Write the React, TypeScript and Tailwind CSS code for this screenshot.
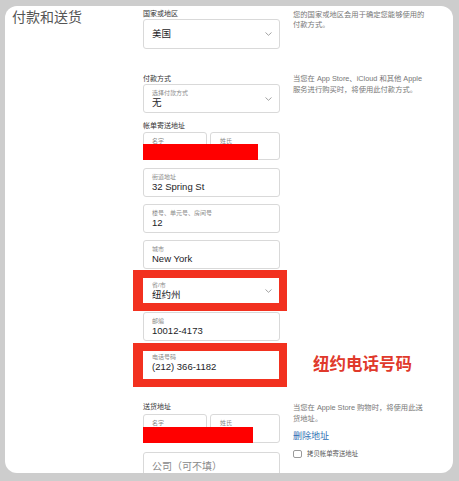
import { FunctionComponent, ReactNode } from "react";

const font = "font-['Liberation_Sans','Noto_Sans_CJK_SC',sans-serif]";

const Chevron: FunctionComponent = () => (
  <svg width="7" height="4" viewBox="0 0 7 4" className="shrink-0">
    <path d="M0.5 0.5 L3.5 3.3 L6.5 0.5" fill="none" stroke="#8c8c8c" strokeWidth="0.8" />
  </svg>
);

interface FieldProps {
  label?: string;
  value: string;
  select?: boolean;
  tall?: boolean;
  noBorder?: boolean;
}

const Field: FunctionComponent<FieldProps> = ({ label, value, select, tall, noBorder }) => (
  <div
    className={`${tall ? "h-[30px]" : "h-[29px]"} w-[137px] rounded-[3px] border ${noBorder ? "border-transparent" : "border-[#d9d9d9]"} bg-white flex items-center pl-[8px] pr-[7px]`}
  >
    <div className="flex-1 flex flex-col">
      {label && <span className="text-[6px] leading-[8px] text-[#8a8a8a]">{label}</span>}
      <span className="text-[9.5px] leading-[12px] text-[#1d1d1f]">{value}</span>
    </div>
    {select && <Chevron />}
  </div>
);

const NameRow: FunctionComponent<{ tall?: boolean; redClass: string }> = ({ tall, redClass }) => (
  <div className={`relative flex gap-[3px] ${tall ? "h-[29px]" : "h-[28px]"}`}>
    <div className="w-[64px] rounded-[3px] border border-[#d9d9d9] pl-[8px] pt-[4px]">
      <span className="text-[6px] leading-[8px] text-[#8a8a8a] block">名字</span>
    </div>
    <div className="flex-1 rounded-[3px] border border-[#d9d9d9] pl-[9px] pt-[4px]">
      <span className="text-[6px] leading-[8px] text-[#8a8a8a] block">姓氏</span>
    </div>
    <div className={`absolute left-0 bottom-0 h-[16px] bg-[#ff0000] ${redClass}`} />
  </div>
);

const Label: FunctionComponent<{ children: ReactNode }> = ({ children }) => (
  <div className="h-[10px] text-[7px] leading-[10px] text-[#333333]">{children}</div>
);

const Desc: FunctionComponent<{ lines: string[]; lh: string }> = ({ lines, lh }) => (
  <div className={`text-[7.3px] ${lh} text-[#777777] whitespace-nowrap`}>
    {lines.map((l, i) => (
      <div key={i}>{l}</div>
    ))}
  </div>
);

const App: FunctionComponent = () => {
  return (
    <div className={`w-[459px] h-[481px] bg-[#cdcdcd] pt-[6px] pl-[5px] ${font}`}>
      <div className="w-[448px] h-[467px] bg-white rounded-[12px] overflow-hidden flex">
        <div className="w-[138px] shrink-0 pl-[7px] pt-[3px]">
          <h1 className="text-[14px] leading-[16px] text-[#555555] font-normal">付款和送货</h1>
        </div>

        <div className="flex flex-col pt-[3px]">
          {/* country */}
          <div className="flex gap-[13px]">
            <div className="w-[137px]">
              <Label>国家或地区</Label>
              <Field value="美国" select tall />
            </div>
            <div className="pt-[0.5px]">
              <Desc lh="leading-[10.5px]" lines={["您的国家或地区会用于确定您能够使用的", "付款方式。"]} />
            </div>
          </div>

          {/* payment */}
          <div className="flex gap-[13px] mt-[25px]">
            <div className="w-[137px]">
              <Label>付款方式</Label>
              <Field label="选择付款方式" value="无" select />
            </div>
            <Desc
              lh="leading-[10.5px]"
              lines={["当您在 App Store、iCloud 和其他 Apple", "服务进行购买时，将使用此付款方式。"]}
            />
          </div>

          {/* billing address */}
          <div className="w-[137px] mt-[8px] flex flex-col">
            <Label>帐单寄送地址</Label>
            <div className="mt-[1px]">
              <NameRow redClass="w-[115px]" />
            </div>
            <div className="mt-[8px] flex flex-col gap-[7px]">
              <Field label="街道地址" value="32 Spring St" />
              <Field label="楼号、单元号、房间号" value="12" />
              <Field label="城市" value="New York" />
              <div className="relative">
                <Field label="省/市" value="纽约州" select noBorder />
                <div className="absolute -left-[10px] -top-[6px] w-[154px] h-[41px] border-[8px] border-l-[10px] border-[#f2311f]" />
              </div>
              <Field label="邮编" value="10012-4173" />
              <div className="relative">
                <Field label="电话号码" value="(212) 366-1182" noBorder />
                <div className="absolute -left-[10px] -top-[5px] w-[154px] h-[44px] border-[8px] border-l-[10px] border-[#f2311f]" />
                <div className="absolute left-[170px] top-[6px] whitespace-nowrap text-[16.5px] leading-[20px] font-semibold text-[#e0392b]">
                  纽约电话号码
                </div>
              </div>
            </div>
          </div>

          <div className="mt-[15px] w-[289px] h-px bg-[#d2d2d2]" />

          {/* shipping address */}
          <div className="flex gap-[13px] mt-[10px]">
            <div className="w-[137px] flex flex-col">
              <Label>送货地址</Label>
              <div className="mt-[2px]">
                <NameRow tall redClass="w-[110px]" />
              </div>
              <div className="mt-[9px] h-[29px] w-[137px] rounded-[3px] border border-[#d9d9d9] pl-[8px] flex items-center">
                <span className="text-[10px] leading-[12px] text-[#8a8a8a]">公司（可不填）</span>
              </div>
            </div>
            <div className="flex flex-col">
              <Desc lh="leading-[11px]" lines={["当您在 Apple Store 购物时，将使用此送", "货地址。"]} />
              <a className="mt-[6px] text-[9px] leading-[12px] text-[#2f6fb3]">删除地址</a>
              <div className="mt-[7px] flex items-center gap-[5px] h-[10px]">
                <div className="w-[9px] h-[8px] rounded-[2px] border border-[#9a9a9a] bg-white" />
                <span className="text-[6.4px] leading-[10px] text-[#555555]">拷贝帐单寄送地址</span>
              </div>
            </div>
          </div>
        </div>
      </div>
    </div>
  );
};

export default App;
